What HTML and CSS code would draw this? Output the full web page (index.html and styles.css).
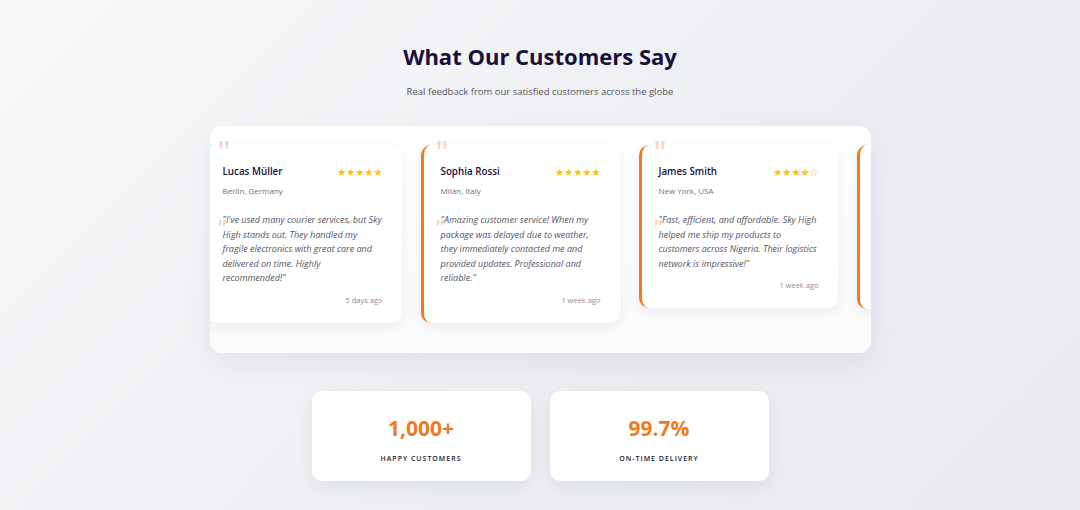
FILE: index.html
```html
<!DOCTYPE html>
<html lang="en">
<head>
<meta charset="utf-8">
<title>What Our Customers Say</title>
<link rel="stylesheet" href="styles.css">
</head>
<body>
<section class="testimonials">
  <h2 class="title">What Our Customers Say</h2>
  <p class="subtitle">Real feedback from our satisfied customers across the globe</p>

  <div class="carousel">
    <div class="track">
      <article class="card">
        <span class="mark">"</span>
        <div class="card-head">
          <h3 class="name">Lucas Müller</h3>
          <span class="stars">★★★★★</span>
        </div>
        <p class="loc">Berlin, Germany</p>
        <p class="quote">"I've used many courier services, but Sky High stands out. They handled my fragile electronics with great care and delivered on time. Highly recommended!"</p>
        <p class="date">5 days ago</p>
      </article>
      <article class="card">
        <span class="mark">"</span>
        <div class="card-head">
          <h3 class="name">Sophia Rossi</h3>
          <span class="stars">★★★★★</span>
        </div>
        <p class="loc">Milan, Italy</p>
        <p class="quote">"Amazing customer service! When my package was delayed due to weather, they immediately contacted me and provided updates. Professional and reliable."</p>
        <p class="date">1 week ago</p>
      </article>
      <article class="card">
        <span class="mark">"</span>
        <div class="card-head">
          <h3 class="name">James Smith</h3>
          <span class="stars">★★★★☆</span>
        </div>
        <p class="loc">New York, USA</p>
        <p class="quote">"Fast, efficient, and affordable. Sky High helped me ship my products to customers across Nigeria. Their logistics network is impressive!"</p>
        <p class="date">1 week ago</p>
      </article>
      <article class="card card-peek" aria-hidden="true"></article>
    </div>
  </div>

  <div class="stats">
    <div class="stat">
      <div class="stat-num">1,000+</div>
      <div class="stat-label">Happy Customers</div>
    </div>
    <div class="stat">
      <div class="stat-num">99.7%</div>
      <div class="stat-label">On-Time Delivery</div>
    </div>
  </div>
</section>
</body>
</html>
```
FILE: styles.css
```css
* { box-sizing: border-box; }

html, body {
  margin: 0;
  height: 100%;
}

body {
  font-family: "Open Sans", "Liberation Sans", sans-serif;
  background: linear-gradient(135deg, #f8f9fa 0%, #eceef2 60%, #e9ebef 100%);
  color: #1a1a2e;
  overflow: hidden;
}

.testimonials {
  display: flex;
  flex-direction: column;
  align-items: center;
  padding-top: 40px;
}

.title {
  margin: 0;
  font-size: 22px;
  line-height: 32px;
  font-weight: 700;
  color: #1b0f3b;
}

.subtitle {
  margin: 13px 0 0;
  font-size: 9.5px;
  line-height: 14px;
  color: #55555f;
}

.carousel {
  margin-top: 27px;
  width: 661px;
  border-radius: 12px;
  background: linear-gradient(180deg, #ffffff 0%, #fafbfc 100%);
  box-shadow: 0 10px 30px rgba(30, 35, 60, 0.07);
  overflow: hidden;
  padding: 19px 0 30px;
}

.track {
  display: flex;
  align-items: flex-start;
  gap: 19px;
  margin-left: -7px;
}

.card {
  position: relative;
  flex: 0 0 199px;
  background: #fff;
  border-left: 3px solid #f07b1c;
  border-radius: 10px;
  box-shadow: 0 4px 14px rgba(20, 25, 50, 0.07);
  padding: 18px 19px 17px 17px;
}

.card-peek {
  height: 164px;
}

.mark {
  position: absolute;
  top: -3px;
  left: 12px;
  font-size: 30px;
  line-height: 20px;
  font-weight: 600;
  color: rgba(240, 123, 28, 0.3);
}

.card-head {
  display: flex;
  justify-content: space-between;
  align-items: center;
}

.name {
  margin: 0;
  font-size: 9.8px;
  line-height: 18px;
  font-weight: 600;
  color: #1b0f3b;
}

.stars {
  font-family: "DejaVu Sans", sans-serif;
  font-size: 10.5px;
  line-height: 14px;
  letter-spacing: -0.3px;
  color: #f7c512;
}

.loc {
  margin: 4px 0 0;
  font-size: 8px;
  line-height: 12px;
  color: #707078;
}

.quote {
  position: relative;
  margin: 16px 0 0;
  font-size: 9px;
  line-height: 14.5px;
  font-style: italic;
  color: #55555f;
}

.quote::before {
  content: '"';
  position: absolute;
  left: -6px;
  top: 4px;
  font-size: 22px;
  line-height: 20px;
  font-weight: 600;
  font-style: italic;
  color: rgba(240, 123, 28, 0.35);
}

.date {
  margin: 8px 0 0;
  text-align: right;
  font-size: 7.5px;
  line-height: 12px;
  color: #8e8e96;
}

.stats {
  margin-top: 38px;
  display: flex;
  gap: 19px;
}

.stat {
  width: 219px;
  height: 90px;
  background: #fff;
  border-radius: 10px;
  box-shadow: 0 6px 18px rgba(20, 25, 50, 0.07);
  display: flex;
  flex-direction: column;
  align-items: center;
  padding-top: 22px;
}

.stat-num {
  font-size: 21px;
  line-height: 30px;
  font-weight: 700;
  color: #f07b1c;
}

.stat-label {
  margin-top: 11px;
  font-size: 7px;
  line-height: 10px;
  font-weight: 600;
  letter-spacing: 1px;
  text-transform: uppercase;
  color: #1b1b2e;
}
```
